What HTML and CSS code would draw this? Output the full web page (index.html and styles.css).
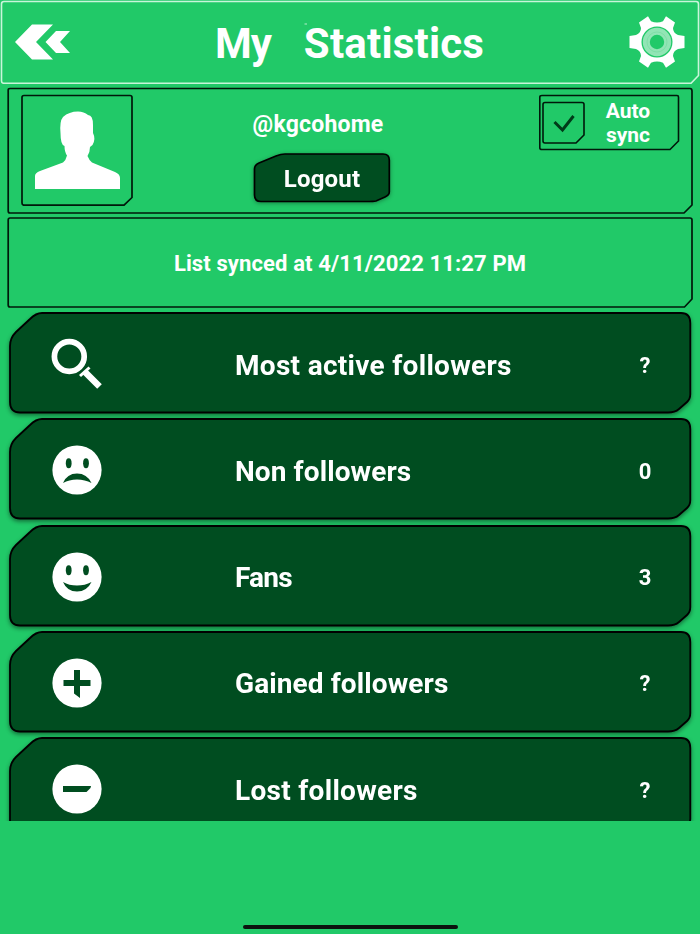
FILE: index.html
```html
<!DOCTYPE html>
<html lang="en">
<head>
    <meta charset="UTF-8">
    <meta name="viewport" content="width=device-width, initial-scale=1.0">
    <title>My Statistics</title>
    <link rel="stylesheet" href="styles.css">
</head>
<body>
    <!-- shared shape of the list rows -->
    <svg class="defs" width="0" height="0">
        <symbol id="row-shape" viewBox="0 0 684 104">
            <path d="M34 1H673Q682.300 1 682.300 11V82Q682.300 87 679 90L671 97Q667 100.500 660 100.500H12Q2 100.500 2 90V34Q2 26 8 20L22 7Q28 1 34 1Z" fill="#004d20" stroke="#000" stroke-width="1.800"/>
        </symbol>
    </svg>

    <header class="header">
        <svg class="frame" viewBox="0 0 700 84">
            <path d="M4 1.500H696Q698.500 1.500 698.500 4V75.500L691 83.300H4Q1.500 83.300 1.500 81V4Q1.500 1.500 4 1.500Z" fill="none" stroke="#c9f5da" stroke-width="1.600"/>
            <path d="M304.500 24H307" stroke="#b5edca"/>
        </svg>
        <div class="header-content">
            <svg class="back" viewBox="0 0 55 36" fill="#fff">
                <path d="M17 .5H38L21 18L38 35.500H17L0 18Z"/>
                <path d="M41 7H55L45 18L55 29H41L30.500 18Z"/>
            </svg>
            <h1><span class="my">My</span> <span>Statistics</span></h1>
            <svg class="gear" viewBox="-28 -28 56 56">
                <path d="M-18-19.500L-9-25.800L-6-20.800Q0-18 6-20.800L9-25.800L18-19.500L16-14Q16-9 21-7L27.500-6V6L21 7Q16 9 16 14L18 19.500L9 25.800L6 20.800Q0 18-6 20.800L-9 25.800L-18 19.500L-16 14Q-16 9-21 7L-27.500 6V-6L-21-7Q-16-9-16-14Z" fill="#fff"/>
                <circle r="15.500" fill="#21c968"/>
                <circle r="10.700" fill="none" stroke="#92e5b5" stroke-width="7"/>
                <circle r="10" fill="none" stroke="#7fdfa7" stroke-width="1"/>
            </svg>
        </div>
    </header>

    <section class="profile">
        <svg class="frame" viewBox="0 0 686 127">
            <path d="M3 1.500H683Q685 1.500 685 4V118L677 126H3Q1.200 126 1.200 124V3Q1.200 1.500 3 1.500Z" fill="none" stroke="#00180a" stroke-width="1.700"/>
        </svg>
        <div class="profile-content">
            <svg class="avatar" viewBox="0 0 112 112">
                <path d="M3 1.500H109Q111 1.500 111 3.500V103.500L103 111.200H3Q1 111.200 1 109V3.500Q1 1.500 3 1.500Z" fill="none" stroke="#00180a" stroke-width="1.700"/>
                <path d="M14 95V82Q14 79 19 77L42 68.500Q45 66 46 61.500Q43.500 58 43.500 52Q39.500 51 39.500 39Q38.500 27 42 23Q48 17.500 57 17.500Q63 17.500 67 21Q72 21 72 31V39Q75 45 71.500 51L69 53Q69 58 66.500 62Q68 66 71 68.500L94 78Q99 80 99 84V95Z" fill="#fff"/>
            </svg>
            <div class="account">
                <div class="username">@kgcohome</div>
                <button class="logout">
                    <svg class="frame" viewBox="0 0 140 52">
                        <path d="M32 2H130Q136.300 2 136.300 8V40Q136.300 43 132 45L123 49Q120 49.500 116 49.500H8Q1.500 49.500 1.500 43V17Q1.500 13 6 11L23 4Q28 2 32 2Z" fill="#004d20" stroke="#000" stroke-width="1.700"/>
                    </svg>
                    <span>Logout</span>
                </button>
            </div>
            <div class="sync">
                <svg class="frame" viewBox="0 0 141 57">
                    <path d="M3 1.500H138Q139.500 1.500 139.500 3V47L131 55.500H3Q.8 55.500 .8 54V3Q.8 1.500 3 1.500Z" fill="none" stroke="#00180a" stroke-width="1.600"/>
                </svg>
                <div class="sync-content">
                    <svg class="checkbox" viewBox="0 0 43 43">
                        <path d="M3 1.500H40Q42 1.500 42 3.500V34L34 42H3Q1 42 1 40V3.500Q1 1.500 3 1.500Z" fill="none" stroke="#00180a" stroke-width="1.600"/>
                        <path d="M12.500 21L20.500 29L31.500 15" fill="none" stroke="#003b19" stroke-width="3"/>
                    </svg>
                    <span class="sync-label">Auto<br>sync</span>
                </div>
            </div>
        </div>
    </section>

    <section class="status">
        <svg class="frame" viewBox="0 0 686 91">
            <path d="M3 1H683Q685 1 685 3V82L677.500 90H3Q1.200 90 1.200 88V3Q1.200 1 3 1Z" fill="none" stroke="#00180a" stroke-width="1.700"/>
        </svg>
        <p>List synced at 4/11/2022 11:27 PM</p>
    </section>

    <main class="list">
        <div class="row">
            <svg class="frame"><use href="#row-shape"/></svg>
            <div class="row-content">
                <svg class="icon" viewBox="0 0 52 52">
                    <circle cx="18.300" cy="18.500" r="14.900" fill="none" stroke="#fff" stroke-width="5.700"/>
                    <path d="M29 38L38.500 29.500" fill="none" stroke="#fff" stroke-width="3"/>
                    <path d="M34 34L48.500 48.500" fill="none" stroke="#fff" stroke-width="6.500"/>
                </svg>
                <span class="label most">Most active followers</span>
                <span class="count">?</span>
            </div>
        </div>
        <div class="row">
            <svg class="frame"><use href="#row-shape"/></svg>
            <div class="row-content">
                <svg class="icon" viewBox="0 0 52 52">
                    <circle cx="26" cy="26" r="24.600" fill="#fff"/>
                    <ellipse cx="17.700" cy="19.300" rx="2.900" ry="5" fill="#004d20"/>
                    <ellipse cx="35" cy="19.300" rx="2.900" ry="5" fill="#004d20"/>
                    <path d="M12 39Q16 29.500 26 29.500T40.500 39Q34 35.500 26 35.500T12 39Z" fill="#004d20"/>
                </svg>
                <span class="label">Non followers</span>
                <span class="count">0</span>
            </div>
        </div>
        <div class="row">
            <svg class="frame"><use href="#row-shape"/></svg>
            <div class="row-content">
                <svg class="icon" viewBox="0 0 52 52">
                    <circle cx="26" cy="26" r="24.600" fill="#fff"/>
                    <ellipse cx="17.700" cy="19.300" rx="2.900" ry="5" fill="#004d20"/>
                    <ellipse cx="35" cy="19.300" rx="2.900" ry="5" fill="#004d20"/>
                    <path d="M12 31Q18 34.500 26 34.500T40.500 31Q36 40.500 26 40.500T12 31Z" fill="#004d20"/>
                </svg>
                <span class="label fans">Fans</span>
                <span class="count">3</span>
            </div>
        </div>
        <div class="row">
            <svg class="frame"><use href="#row-shape"/></svg>
            <div class="row-content">
                <svg class="icon" viewBox="0 0 52 52">
                    <circle cx="26" cy="26" r="24.600" fill="#fff"/>
                    <path d="M23 13H29V23H39.500V29H29V41L23 36.500V29H12.500V23H23Z" fill="#004d20"/>
                </svg>
                <span class="label">Gained followers</span>
                <span class="count">?</span>
            </div>
        </div>
        <div class="row">
            <svg class="frame"><use href="#row-shape"/></svg>
            <div class="row-content">
                <svg class="icon" viewBox="0 0 52 52">
                    <circle cx="26" cy="26" r="24.600" fill="#fff"/>
                    <path d="M12 23H40L39.500 25L35.500 29H12Z" fill="#004d20"/>
                </svg>
                <span class="label most">Lost followers</span>
                <span class="count">?</span>
            </div>
        </div>
    </main>

    <footer class="home-bar"><span></span></footer>
</body>
</html>
```
FILE: styles.css
```css
* {
    box-sizing: border-box;
}
body {
    margin: 0;
    height: 934px;
    overflow: hidden;
    display: flex;
    flex-direction: column;
    background-color: #21c968;
    color: #fff;
    font-family: Roboto, "Liberation Sans", sans-serif;
    font-weight: 700;
}
svg {
    display: block;
    flex-shrink: 0;
}
.defs {
    display: none;
}
/* frame and content share one grid cell */
.header, .profile, .status, .row, .logout, .sync {
    display: grid;
    grid-template: 100% / 100%;
    flex-shrink: 0;
}
.header > *, .profile > *, .status > *, .row > *, .logout > *, .sync > * {
    grid-area: 1 / 1;
}
.frame {
    width: 100%;
    height: 100%;
}
.header {
    height: 84px;
}
.header-content {
    display: flex;
    align-items: center;
    justify-content: space-between;
    padding: 0 15px;
}
.back {
    width: 55px;
    height: 36px;
}
.gear {
    width: 56px;
    height: 56px;
}
h1 {
    display: flex;
    gap: 33px;
    margin: 3px 0 0;
    font-size: 42px;
    line-height: 50px;
    letter-spacing: 0.2px;
}
.my {
    letter-spacing: -1px;
}
.profile {
    width: 686px;
    height: 127px;
    margin: 3px 0 0 7px;
}
.profile-content {
    display: flex;
    padding: 7px 13px 0 14px;
    align-items: flex-start;
}
.avatar {
    width: 112px;
    height: 112px;
}
.account {
    width: 140px;
    margin-left: 120px;
    display: flex;
    flex-direction: column;
    align-items: center;
}
.username {
    height: 58px;
    line-height: 61px;
    font-size: 23px;
    letter-spacing: 0.2px;
    margin-right: 10px;
}
.logout {
    width: 140px;
    height: 52px;
    padding: 0;
    border: 0;
    background: none;
    color: inherit;
    font: inherit;
    font-size: 24px;
    line-height: 54px;
    letter-spacing: 0.2px;
    filter: drop-shadow(0 1px 2px rgba(0, 0, 0, 0.35));
}
.logout span {
    padding-right: 2px;
}
.sync {
    width: 141px;
    height: 57px;
    margin-left: auto;
}
.sync-content {
    display: flex;
    padding: 7px 4px 0 3px;
}
.checkbox {
    width: 43px;
    height: 43px;
}
.sync-label {
    flex: 1;
    margin-top: -2px;
    padding-right: 5px;
    text-align: center;
    font-size: 21px;
    line-height: 24px;
}
.status {
    width: 686px;
    height: 91px;
    margin: 3px 0 0 7px;
}
.status p {
    margin: 0;
    text-align: center;
    font-size: 22px;
    line-height: 94px;
    letter-spacing: 0.120px;
    white-space: nowrap;
}
.list {
    display: flex;
    flex-direction: column;
    gap: 2.300px;
    height: 509px;
    margin-top: 4px;
    padding-left: 8px;
    overflow: hidden;
}
.row {
    width: 684px;
    height: 104px;
    filter: drop-shadow(0 2px 2px rgba(0, 0, 0, 0.45));
}
.row-content {
    display: flex;
    align-items: center;
    padding: 0 28px 0 43px;
}
.icon {
    width: 52px;
    height: 52px;
}
.label {
    width: 391px;
    margin-left: 132px;
    padding-top: 2px;
    font-size: 28px;
    letter-spacing: 0.1px;
    white-space: nowrap;
}
.most {
    letter-spacing: 0.3px;
}
.fans {
    letter-spacing: -0.8px;
}
.count {
    width: 38px;
    padding-top: 2px;
    text-align: center;
    font-size: 22px;
}
.home-bar {
    display: flex;
    justify-content: center;
    align-items: flex-end;
    flex: 1;
    padding-bottom: 5px;
}
.home-bar span {
    width: 215px;
    height: 4px;
    border-radius: 2px;
    background-color: #0c130f;
}
```
